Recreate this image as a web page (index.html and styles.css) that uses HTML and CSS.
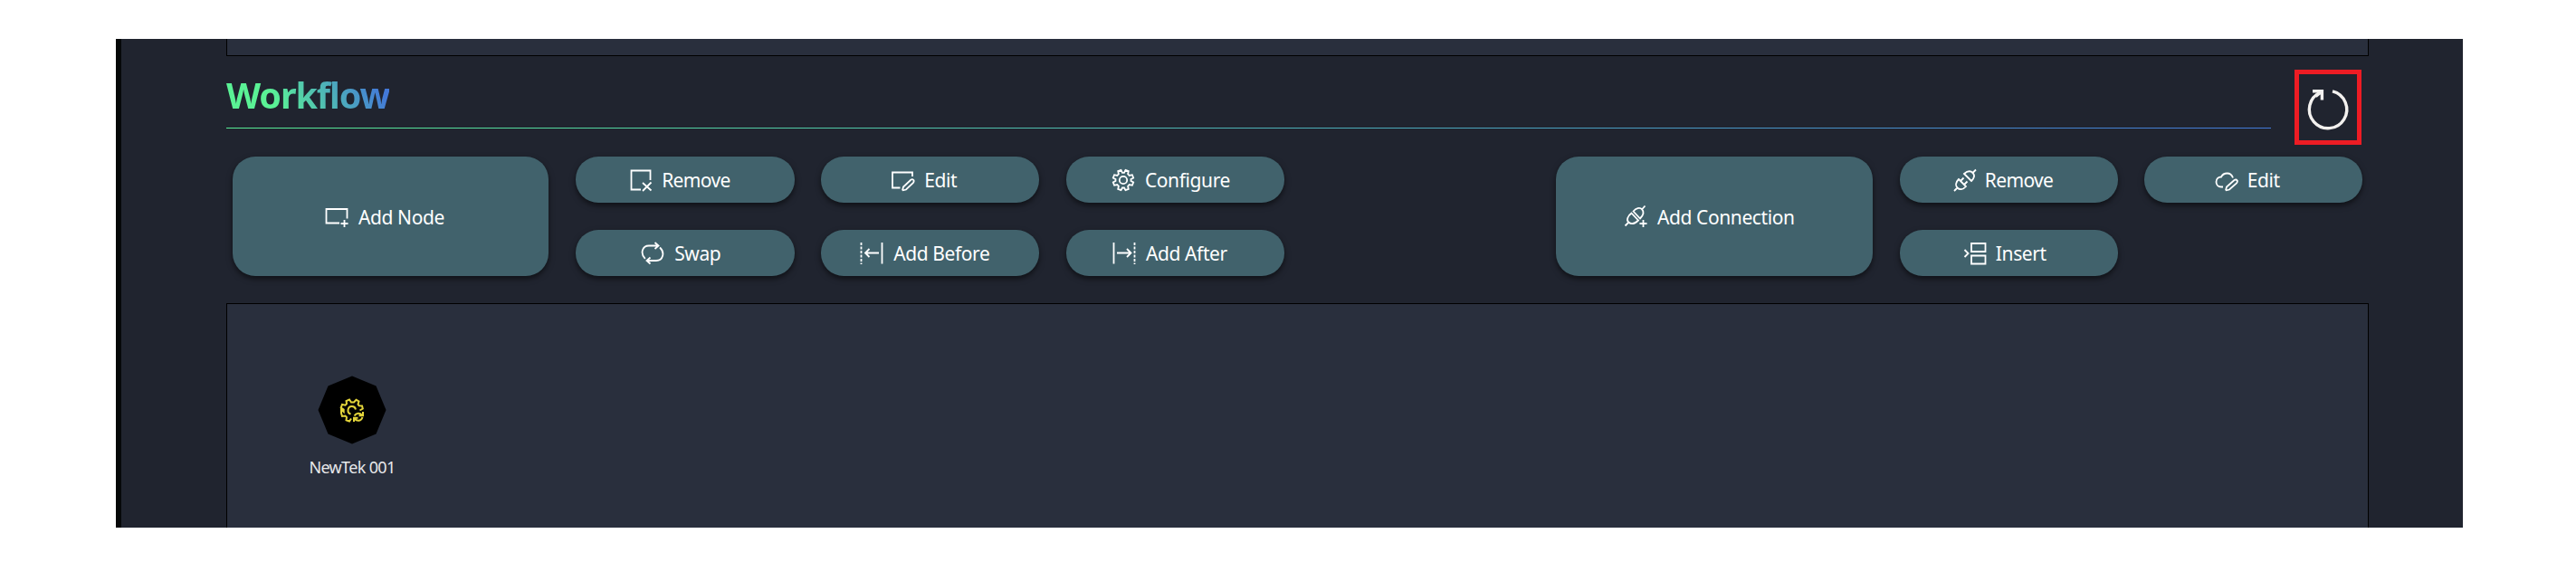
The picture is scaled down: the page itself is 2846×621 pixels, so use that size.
FILE: index.html
```html
<!DOCTYPE html>
<html lang="en">
<head>
<meta charset="utf-8">
<title>Workflow</title>
<link rel="stylesheet" href="styles.css">
</head>
<body>
<main class="app">
  <section class="panel panel-previous"></section>

  <header class="section-head">
    <div class="title-bar"><h1 class="title">Workflow</h1></div>
    <button class="refresh" aria-label="Refresh">
      <svg width="64" height="73" viewBox="0 0 64 73"><path d="M37 18.900A20.700 20.700 0 1 1 23.800 20" fill="none" stroke="#f3f1ef" stroke-width="3.400"/><path d="M15 18.700H25.400V28.500M25 19L18.500 24.500" fill="none" stroke="#f3f1ef" stroke-width="3.400"/></svg>
    </button>
  </header>

  <div class="toolbar">
    <div class="group">
      <button class="btn btn-large add-node">
        <svg class="icon" viewBox="0 0 26 26"><path d="M24.500 15.500V5H1.500V20.500H16M21.500 17V25M17.500 21H25.500"/></svg>
        <span>Add Node</span>
      </button>
      <div class="grid grid-nodes">
        <button class="btn remove-node">
          <svg class="icon" viewBox="0 0 26 26"><path d="M22.500 13V2.500H1.500V23.500H12M14 16L23.500 24.500M23.500 15.500L14 25"/></svg>
          <span>Remove</span>
        </button>
        <button class="btn edit-node">
          <svg class="icon" viewBox="0 0 26 26"><path d="M23 9V4.500H1V21.500H9.500M12 24.500L13 20.500L21.500 12.500Q23.500 11.500 24.500 13.200Q25 14.500 24 15.800L16 23.500L12 24.500"/></svg>
          <span>Edit</span>
        </button>
        <button class="btn configure">
          <svg class="icon" viewBox="0 0 26 26"><path d="M10.500 1.800L12 4.800H14L15.500 1.800L18.800 3.100L18.100 6.300L19.700 7.900L22.900 7.200L24.200 10.500L21.500 12V14L24.200 15.500L22.900 18.800L19.700 18.100L18.100 19.700L18.800 22.900L15.500 24.200L14 21.500H12L10.500 24.200L7.200 22.900L7.900 19.700L6.300 18.100L3.100 18.800L1.800 15.500L4.500 14V12L1.800 10.500L3.100 7.200L6.300 7.900L7.900 6.300L7.200 3.100Z"/><circle cx="13" cy="13" r="4.200"/></svg>
          <span>Configure</span>
        </button>
        <button class="btn swap">
          <svg class="icon" viewBox="0 0 26 26"><path d="M4.800 18.800C-1 13 1.500 4.500 9 4.500H19.500M15.500 1L19.500 4.500L15.500 8M21 6.500C27 12 24.500 21 17 21H6.500M10.500 17.500L6.500 21L10.500 24.500"/></svg>
          <span>Swap</span>
        </button>
        <button class="btn add-before">
          <svg class="icon" viewBox="0 0 26 26"><path d="M24.500 1V24.500M21 12.500H6M10.500 8L6 12.500L10.500 17"/><path d="M1.500 1V25" stroke-dasharray="3 1.500"/></svg>
          <span>Add Before</span>
        </button>
        <button class="btn add-after">
          <svg class="icon" viewBox="0 0 26 26"><path d="M1.500 1V24.500M5 12.500H20.500M16 8L20.500 12.500L16 17"/><path d="M24.500 1V25" stroke-dasharray="3 1.500"/></svg>
          <span>Add After</span>
        </button>
      </div>
    </div>

    <div class="group">
      <button class="btn btn-large add-connection">
        <svg class="icon" viewBox="0 0 26 26"><path d="M1.500 23.500L5 20M19.500 6L23.500 1.500M8.500 9.500L16 17.500C12 21.500 8 22 5.200 19.500C2.500 17 4.500 12.500 8.500 9.500ZM10.500 7.500L18 15.500C22 11.500 22.500 8 20 5.200C17.500 2.500 13.500 4 10.500 7.500ZM21.500 17V25M17.500 21H25.500"/></svg>
        <span>Add Connection</span>
      </button>
      <div class="grid grid-connections">
        <button class="btn remove-connection">
          <svg class="icon" viewBox="0 0 26 26"><path d="M1 25L4.500 21.500M21.500 5L25 1.500M6 12L14 20C10.500 24 7 24 4.500 21.500C2 19 3 15 6 12ZM12 6L20 14C23.500 10.500 24 7.500 21.500 5C19 2.500 15.500 3 12 6ZM8 14L11.500 10.500M12 18L15.500 14.500"/></svg>
          <span>Remove</span>
        </button>
        <button class="btn edit-connection">
          <svg class="icon" viewBox="0 0 26 26"><path d="M9 20.500H7C3.500 20.500 1.500 18 1.500 15C1.500 11.500 4 9.500 7 9.500C8.500 6.500 11 5.500 13.500 5.500C17 5.500 19 7.500 20 10.500M12 24.500L13 20.500L21.500 13Q23.500 11.800 24.700 13.500Q25.300 14.800 24 16.300L16 23.500L12 24.500"/></svg>
          <span>Edit</span>
        </button>
        <button class="btn insert">
          <svg class="icon" viewBox="0 0 26 26"><path d="M9 2H24.500V11H9ZM9 15.500H24.500V24.500H9ZM1.500 9L5.500 13L1.500 17"/></svg>
          <span>Insert</span>
        </button>
      </div>
    </div>
  </div>

  <section class="panel canvas">
    <div class="node">
      <svg width="76" height="76" viewBox="-38 -38 76 76">
        <path d="M0-37.500L26.500-26.500L37.500 0L26.500 26.500L0 37.500L-26.500 26.500L-37.500 0L-26.500-26.500Z"/>
        <path class="node-gear" d="M8.500 .5L11.800-1.500L11-4.500L7.700-4.700L6.500-6.300L7.500-9.500L4.500-11.200L2-8.500H-1L-3-11.500L-6.500-10L-6-6.800L-7.500-5.300L-11-6L-12.300-2.500L-9.300-.5V2L-12-.5V3.500L-11 7L-7.500 6.500L-6 8L-6.500 11.300L-3 12.500L-1 9.500"/>
        <path class="node-gear" d="M4-.5A4.300 4.300 0 1 0-1.500 4.500M2.500 6.500C4.500 3 8.500 2.800 10.800 5.500M12 2V6.200H7.500M11.500 8C10 12.500 5.500 12.800 3 10M2 13V8.800H6.500"/>
      </svg>
      <span class="node-name">NewTek 001</span>
    </div>
  </section>
</main>
</body>
</html>
```
FILE: styles.css
```css
* { box-sizing: border-box; }

body {
  margin: 0;
  padding: 43px 0 0 128px;
  background: #fff;
  font-family: "Noto Sans", "Open Sans", sans-serif;
}

button {
  border: 0;
  padding: 0;
  font: inherit;
  color: inherit;
}

.app {
  width: 2593px;
  height: 540px;
  padding: 0 104px 0 116px;
  border-left: 6px solid #060809;
  background: #20242f;
  overflow: hidden;
  color: #fff;
}

.panel {
  width: 2367px;
  background: #292f3d;
  border: 1px solid #000;
}

.panel-previous {
  height: 19px;
  border-top: 0;
}

.section-head {
  display: flex;
  justify-content: space-between;
  height: 111px;
  padding-right: 8px;
}

.title-bar {
  width: 2259px;
  height: 80px;
  padding-top: 15px;
  background: linear-gradient(90deg, #57ec95, #4379d8) 0 100% / 100% 1px no-repeat;
}

.title {
  width: max-content;
  margin: 0;
  font-size: 39.5px;
  line-height: 56px;
  font-weight: 700;
  letter-spacing: -1.1px;
  color: transparent;
  background: linear-gradient(60deg, #5af295 30%, #4379d8 90%);
  -webkit-background-clip: text;
  background-clip: text;
}

.refresh {
  width: 74px;
  height: 83px;
  margin-top: 15px;
  border: 5px solid #ed1c24;
  background: none;
}

.refresh svg { display: block; }

.toolbar {
  display: flex;
  justify-content: space-between;
  height: 162px;
  padding: 0 7px;
}

.group {
  display: flex;
  gap: 30.2px;
}

.grid {
  display: grid;
  grid-auto-rows: 51px;
  row-gap: 30px;
  align-content: start;
}

.grid-nodes {
  grid-template-columns: repeat(3, 241.200px);
  column-gap: 29.600px;
}

.grid-connections {
  grid-template-columns: repeat(2, 241.200px);
  column-gap: 28.800px;
}

.btn {
  display: flex;
  align-items: center;
  gap: 11px;
  height: 51px;
  padding-left: var(--lead);
  border-radius: 25px;
  background: #41626c;
  box-shadow: 0 3px 6px rgba(0, 0, 0, 0.55);
  font-size: 21px;
  line-height: 28px;
  letter-spacing: -0.4px;
  white-space: nowrap;
}

.btn span { padding-top: 1px; }

.btn-large {
  width: 349.200px;
  height: 132px;
}

.icon {
  flex: none;
  width: 26px;
  height: 26px;
  fill: none;
  stroke: #fff;
  stroke-width: 1.800;
}

.add-node { --lead: 102px; }
.remove-node { --lead: 59.800px; }
.edit-node { --lead: 78px; }
.configure { --lead: 50px; }
.swap { --lead: 71.800px; }
.add-before { --lead: 43px; }
.add-after { --lead: 51px; }
.add-connection { --lead: 74.500px; }
.remove-connection { --lead: 59px; }
.edit-connection { --lead: 78px; }
.insert { --lead: 70px; }

.remove-node,
.remove-connection {
  gap: 9px;
  letter-spacing: -0.65px;
}

.edit-node,
.edit-connection,
.insert { gap: 10px; }

.canvas {
  height: 260px;
  padding: 79px 0 0 78px;
}

.node {
  display: flex;
  flex-direction: column;
  align-items: center;
  width: 120px;
}

.node-gear {
  fill: none;
  stroke: #e3d43a;
  stroke-width: 2;
}

.node-name {
  margin-top: 13px;
  font-size: 18px;
  line-height: 25px;
  letter-spacing: -0.65px;
  color: #e7e8ea;
}
```
